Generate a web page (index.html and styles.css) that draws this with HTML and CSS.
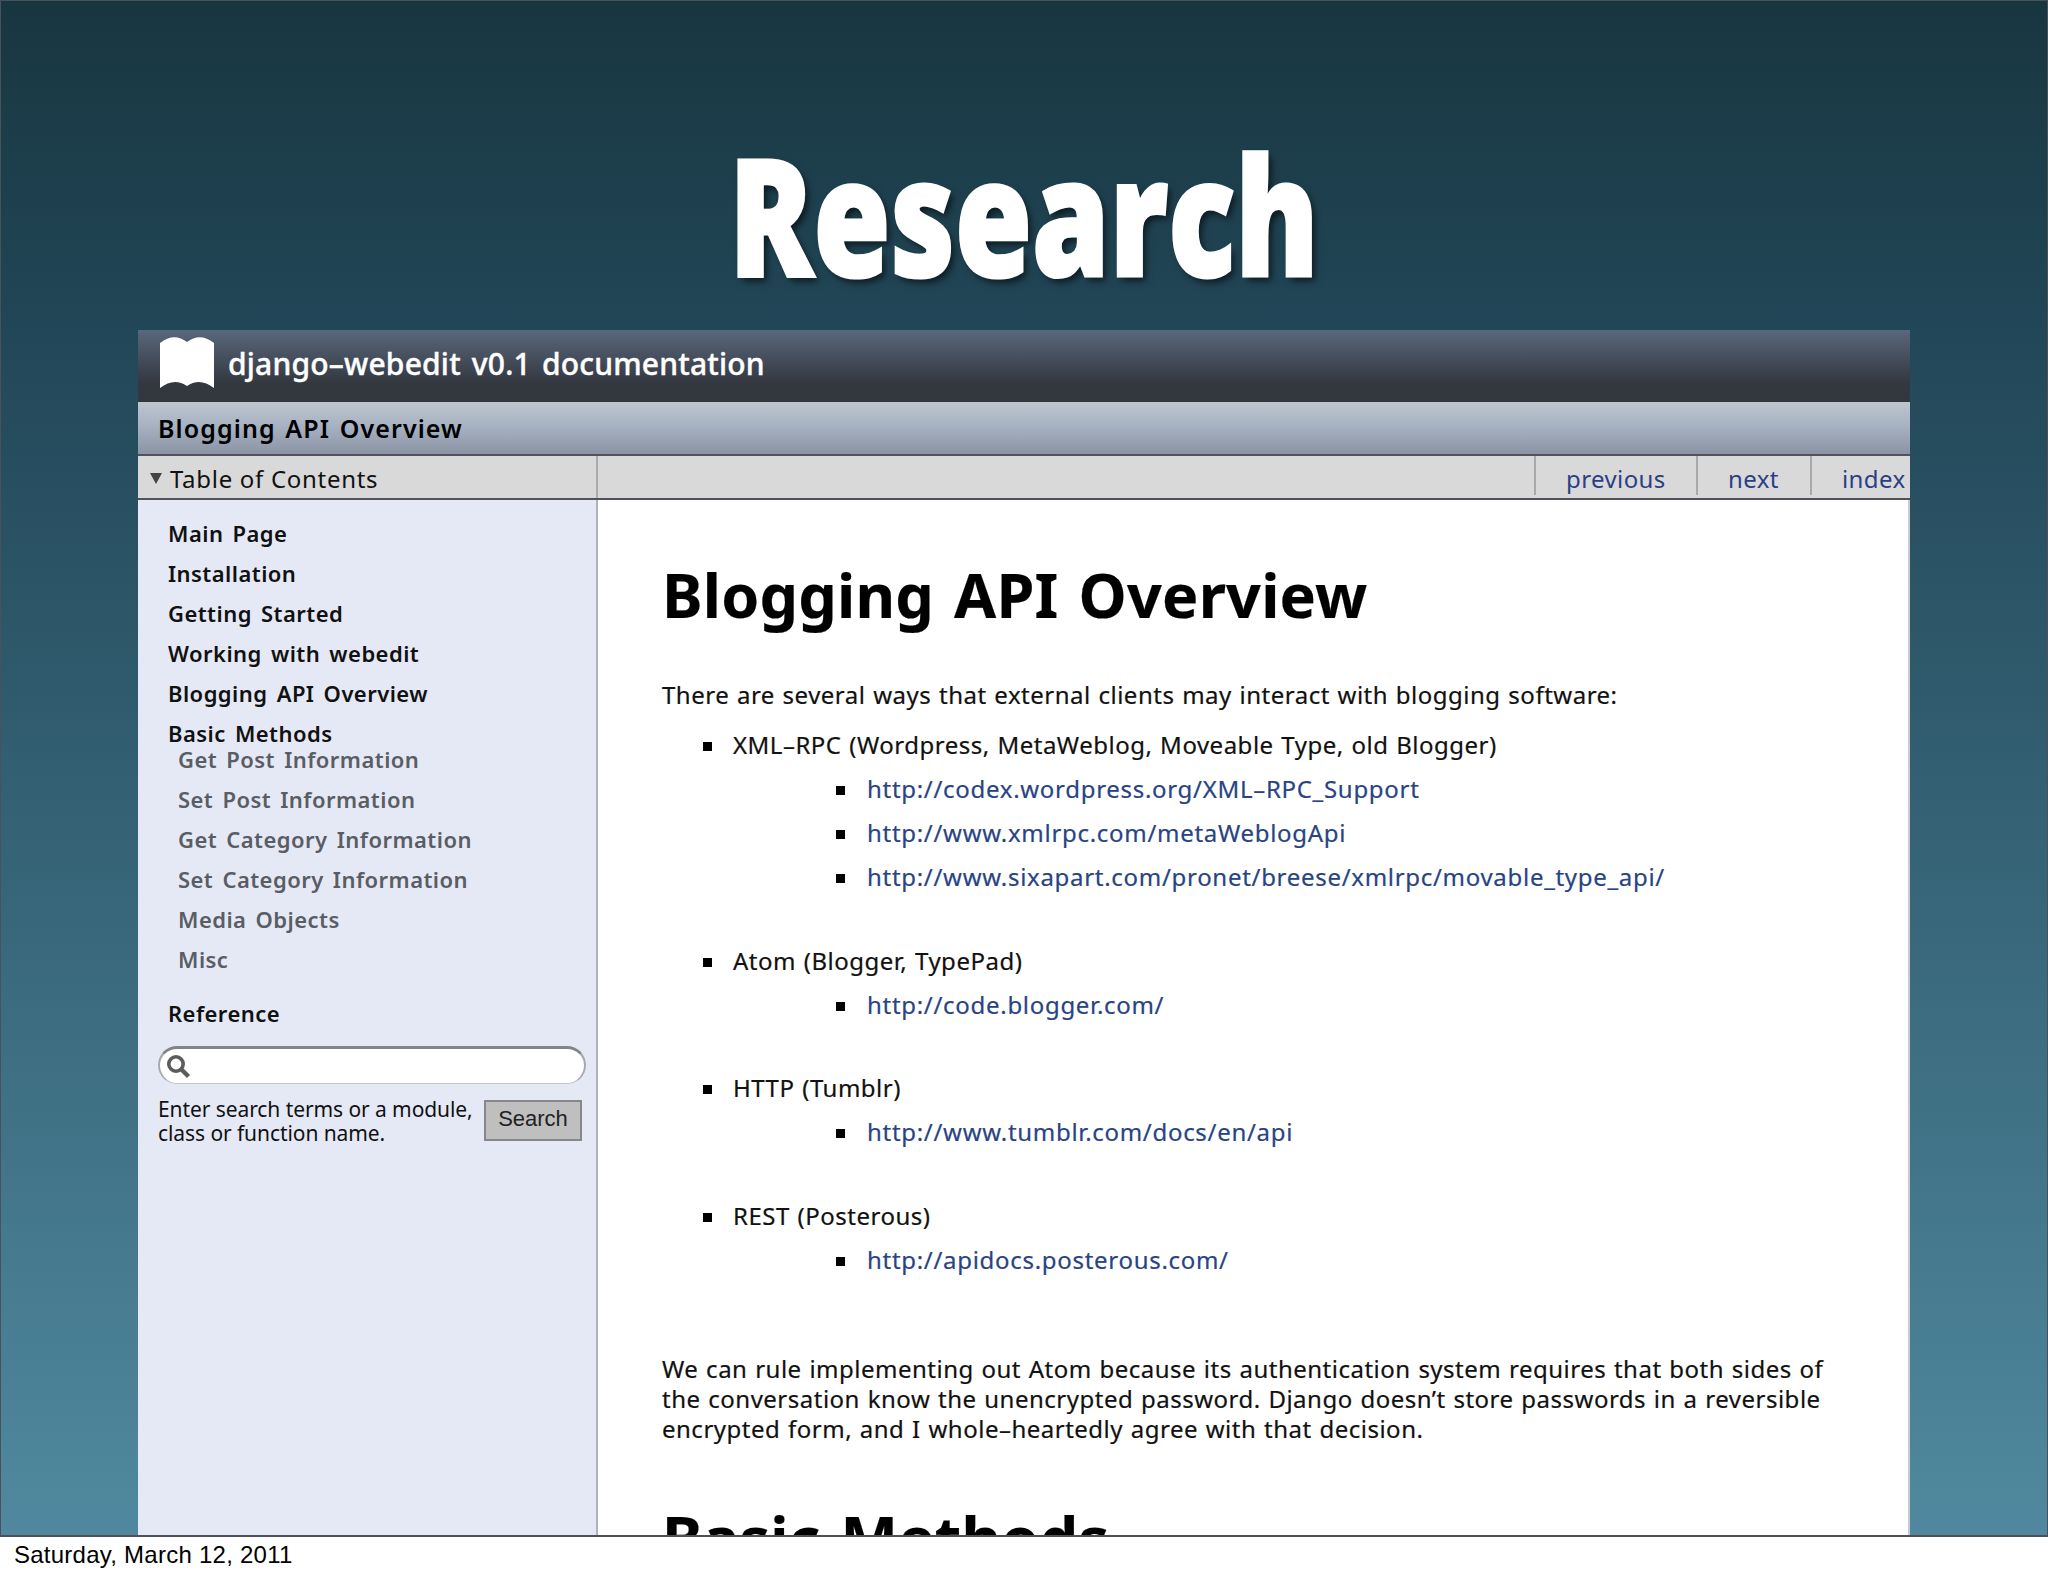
FILE: index.html
```html
<!DOCTYPE html>
<html lang="en">
<head>
    <meta charset="UTF-8">
    <title>Research</title>
    <link rel="stylesheet" href="styles.css">
</head>
<body>
    <main class="slide">
        <h1 class="slide-title"><span>Research</span></h1>
        <section class="docs">
            <header class="docs-header">
                <svg class="book" width="56" height="52" viewBox="0 0 56 52">
                    <path fill="#fff" d="M1 6Q15-5 28 5Q41-5 55 6V51Q41 40 28 49Q15 40 1 51Z"/>
                </svg>
                <span class="docs-name">django–webedit v0.1 documentation</span>
            </header>
            <div class="docs-page"><span>Blogging API Overview</span></div>
            <nav class="docs-nav">
                <div class="toc-title"><i class="arrow"></i><span>Table of Contents</span></div>
                <a class="prev">previous</a>
                <a class="next">next</a>
                <a class="index">index</a>
            </nav>
            <div class="docs-body">
                <aside class="sidebar">
                    <ul class="toc">
                        <li>Main Page</li>
                        <li>Installation</li>
                        <li>Getting Started</li>
                        <li>Working with webedit</li>
                        <li>Blogging API Overview</li>
                        <li class="open">Basic Methods
                            <ul class="sub">
                                <li>Get Post Information</li>
                                <li>Set Post Information</li>
                                <li>Get Category Information</li>
                                <li>Set Category Information</li>
                                <li>Media Objects</li>
                                <li>Misc</li>
                            </ul>
                        </li>
                        <li class="reference">Reference</li>
                    </ul>
                    <div class="search-field">
                        <svg width="26" height="26" viewBox="0 0 26 26" fill="none" stroke="#5c5c5c">
                            <circle cx="10" cy="10" r="7.2" stroke-width="3.6"/>
                            <path d="M15.5 15.5L22.5 22.5" stroke-width="4.4"/>
                        </svg>
                    </div>
                    <div class="search-row">
                        <p>Enter search terms or a module,<br>class or function name.</p>
                        <button>Search</button>
                    </div>
                </aside>
                <article class="content">
                    <h2>Blogging API Overview</h2>
                    <p class="intro">There are several ways that external clients may interact with blogging software:</p>
                    <ul class="apis">
                        <li>XML–RPC (Wordpress, MetaWeblog, Moveable Type, old Blogger)
                            <ul>
                                <li><a>http://codex.wordpress.org/XML–RPC_Support</a></li>
                                <li><a>http://www.xmlrpc.com/metaWeblogApi</a></li>
                                <li><a>http://www.sixapart.com/pronet/breese/xmlrpc/movable_type_api/</a></li>
                            </ul>
                        </li>
                        <li>Atom (Blogger, TypePad)
                            <ul>
                                <li><a>http://code.blogger.com/</a></li>
                            </ul>
                        </li>
                        <li>HTTP (Tumblr)
                            <ul>
                                <li><a>http://www.tumblr.com/docs/en/api</a></li>
                            </ul>
                        </li>
                        <li>REST (Posterous)
                            <ul>
                                <li><a>http://apidocs.posterous.com/</a></li>
                            </ul>
                        </li>
                    </ul>
                    <p class="decision">We can rule implementing out Atom because its authentication system requires that both sides of<br>the conversation know the unencrypted password. Django doesn’t store passwords in a reversible<br>encrypted form, and I whole–heartedly agree with that decision.</p>
                    <h2>Basic Methods</h2>
                </article>
            </div>
        </section>
    </main>
    <footer class="date">Saturday, March 12, 2011</footer>
</body>
</html>
```
FILE: styles.css
```css
* {
    box-sizing: border-box;
}
body {
    margin: 0;
    height: 1576px;
    overflow: hidden;
    background: #fff;
    font-family: "Noto Sans", "Open Sans", sans-serif;
    color: #111;
}
ul, p, h1, h2 {
    margin: 0;
    padding: 0;
}
ul {
    list-style: none;
}
.slide {
    height: 1537px;
    display: flex;
    flex-direction: column;
    overflow: hidden;
    border: 1px solid #4b5158;
    border-bottom: 2px solid #505058;
    background: linear-gradient(#183640, #224758 22%, #50899f);
}
.slide-title {
    height: 329px;
    padding-top: 98px;
    text-align: center;
    font-family: "Open Sans", sans-serif;
    font-size: 164px;
    font-weight: 800;
    line-height: 228px;
    color: #fff;
}
.slide-title span {
    display: inline-block;
    transform: scaleX(0.76);
    -webkit-text-stroke: 3px #fff;
    text-shadow: 5px 5px 8px rgba(0,0,0,0.6);
}
.docs {
    width: 1772px;
    height: 1205px;
    margin-left: 137px;
    display: flex;
    flex-direction: column;
    overflow: hidden;
    white-space: nowrap;
    background: #fff;
}

/* header bars */
.docs-header {
    height: 72px;
    display: flex;
    padding: 7px 0 0 21px;
    gap: 13px;
    background: linear-gradient(#59677c, #33373f 75%, #33373d);
}
.docs-name {
    color: #fff;
    font-size: 30px;
    font-weight: 500;
    line-height: 53px;
    letter-spacing: 0.2px;
    word-spacing: 3px;
    -webkit-text-stroke: 0.4px #fff;
}
.docs-page {
    height: 54px;
    padding-left: 20px;
    border-bottom: 2px solid #50525e;
    background: linear-gradient(#bfc7cc, #a7b2c3 45%, #8b94a5);
    color: #000;
    font-size: 25px;
    font-weight: 600;
    line-height: 53px;
    letter-spacing: 1.1px;
    word-spacing: 2px;
}
.docs-nav {
    height: 44px;
    display: flex;
    border-bottom: 2px solid #50525c;
    background: #d9d9d9;
    font-size: 24px;
    line-height: 45px;
    letter-spacing: 0.4px;
}
.toc-title {
    width: 460px;
    display: flex;
    align-items: center;
    gap: 8px;
    padding: 2px 0 0 12px;
    margin-right: auto;
    border-right: 2px solid #aaaab0;
    letter-spacing: 0.7px;
}
.arrow {
    border: 6px solid transparent;
    border-top: 11px solid #444;
    border-bottom: 0;
}
.docs-nav a {
    height: 39px;
    padding-left: 30px;
    border-left: 2px solid #a9a9ab;
    color: #2a3f86;
}
.docs-nav .prev {
    width: 162px;
}
.next {
    width: 114px;
}
.index {
    width: 100px;
}

/* sidebar */
.docs-body {
    flex: 1;
    display: flex;
    min-height: 0;
}
.sidebar {
    width: 460px;
    padding: 13px 10px 0 20px;
    border-right: 2px solid #b0b2bd;
    background: #e5e9f6;
}
.toc {
    padding-left: 10px;
    font-size: 22px;
    font-weight: 600;
    line-height: 40px;
    letter-spacing: 0.45px;
    word-spacing: 3px;
}
.sub {
    margin-top: -14px;
    padding-left: 10px;
    color: #5a5d64;
}
.reference {
    margin-top: 14px;
}
.search-field {
    width: 428px;
    height: 38px;
    margin-top: 13px;
    padding: 8px 6px;
    border: 2px solid #a5a8ae;
    border-top: 3px solid #808389;
    border-bottom: 1px solid #c4c6cc;
    border-radius: 19px;
    background: #fff;
}
.search-field svg {
    display: block;
    margin-top: -3px;
}
.search-row {
    display: flex;
    justify-content: space-between;
    padding: 13px 4px 0 0;
}
.search-row p {
    font-size: 21px;
    line-height: 24px;
    letter-spacing: -0.08px;
}
.search-row button {
    width: 98px;
    height: 41px;
    margin-top: 3px;
    padding: 0 0 4px;
    border: 2px solid #85878c;
    background: #bfbfc0;
    color: #222;
    font-family: "Liberation Sans", Arial, sans-serif;
    font-size: 22px;
}

/* document text */
.content {
    flex: 1;
    padding: 55px 0 0 64px;
    border-right: 2px solid #c9cbd0;
    font-size: 24px;
    letter-spacing: 0.5px;
    word-spacing: 1px;
    -webkit-text-stroke: 0.2px;
}
.content h2 {
    color: #000;
    font-size: 61px;
    font-weight: 700;
    line-height: 80px;
    letter-spacing: 0.2px;
    word-spacing: 4px;
}
.content p {
    line-height: 30px;
}
.intro {
    margin: 45px 0 13px;
}
.apis li {
    position: relative;
    line-height: 44px;
}
.apis > li {
    margin: 0 0 39.7px 71px;
}
.apis ul {
    padding-left: 134px;
    letter-spacing: 0.7px;
}
.apis li::before {
    content: "";
    position: absolute;
    left: -30px;
    top: 19px;
    width: 9px;
    height: 9px;
    background: #000;
}
.apis ul li::before {
    left: -31px;
}
.apis a {
    color: #284484;
}
.decision {
    margin: 72px 0 54px;
}
.date {
    padding-left: 14px;
    color: #000;
    font-family: "Liberation Sans", Arial, sans-serif;
    font-size: 24px;
    line-height: 35px;
    letter-spacing: 0.25px;
}
```
